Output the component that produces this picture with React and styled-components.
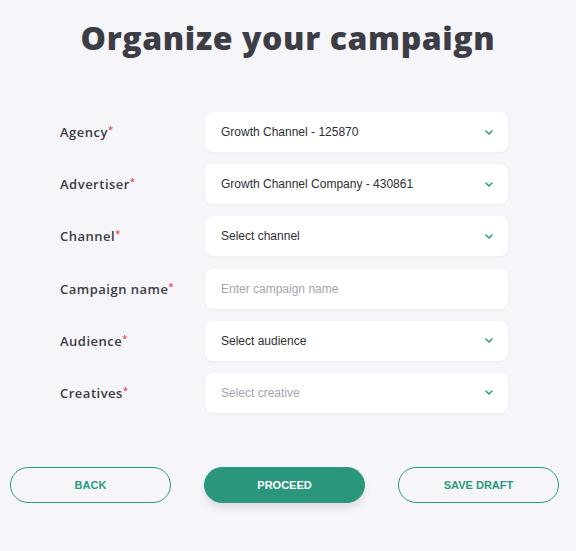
import React from "react";
import styled, { createGlobalStyle } from "styled-components";

const Global = createGlobalStyle`
  html, body { margin: 0; padding: 0; background: #f6f6fa; }
  body { font-family: "Liberation Sans", Arial, sans-serif; }
`;

const Page = styled.div`
  width: 576px;
  height: 551px;
  background: #f6f6fa;
  box-sizing: border-box;
  padding-top: 17px;
`;

const Title = styled.h1`
  margin: 0;
  text-align: center;
  font-family: "Open Sans", sans-serif;
  font-weight: 800;
  font-size: 32px;
  line-height: 42px;
  color: #3d3d45;
  letter-spacing: 0.6px;
`;

const Form = styled.div`
  display: flex;
  flex-direction: column;
  gap: 12.2px;
  margin-top: 53px;
  padding-left: 60px;
`;

const Row = styled.div`
  display: grid;
  grid-template-columns: 145px 303px;
  align-items: center;
`;

const Label = styled.div`
  font-family: "Open Sans", sans-serif;
  font-weight: 600;
  font-size: 13px;
  line-height: 16px;
  color: #3c3c44;
  letter-spacing: 0.5px;
  margin-top: -2px;
`;

const Star = styled.span`
  color: #e8404f;
  font-size: 9px;
  vertical-align: 4px;
  margin-left: 0;
`;

const Field = styled.div`
  height: 40px;
  box-sizing: border-box;
  background: #ffffff;
  border-radius: 8px;
  box-shadow: 0 1px 3px rgba(60, 60, 90, 0.06);
  display: flex;
  align-items: center;
  justify-content: space-between;
  padding: 0 15px 0 16px;
  font-size: 12px;
  color: ${(p) => (p.$muted ? "#a4a4b2" : "#2e2e34")};
`;

const Chevron = () => (
  <svg width="8" height="5" viewBox="0 0 8 5" fill="none">
    <path d="M1 1 L4 4 L7 1" stroke="#2a9a80" strokeWidth="1.5" strokeLinecap="round" strokeLinejoin="round" />
  </svg>
);

const Buttons = styled.div`
  display: flex;
  gap: 33px;
  padding-left: 10px;
  margin-top: 54px;
`;

const Button = styled.button`
  width: 161px;
  height: 36px;
  border-radius: 18px;
  box-sizing: border-box;
  font-family: "Liberation Sans", Arial, sans-serif;
  font-weight: 700;
  font-size: 11px;
  text-transform: uppercase;
  cursor: pointer;
  border: 1px solid #2a9a80;
  background: ${(p) => (p.$primary ? "#2a967b" : "transparent")};
  color: ${(p) => (p.$primary ? "#ffffff" : "#279a7c")};
  box-shadow: ${(p) => (p.$primary ? "0 5px 6px rgba(40, 40, 60, 0.12)" : "none")};
`;

const rows = [
  { label: "Agency", value: "Growth Channel - 125870", select: true },
  { label: "Advertiser", value: "Growth Channel Company - 430861", select: true },
  { label: "Channel", value: "Select channel", select: true },
  { label: "Campaign name", value: "Enter campaign name", muted: true },
  { label: "Audience", value: "Select audience", select: true },
  { label: "Creatives", value: "Select creative", select: true, muted: true },
];

export default function App() {
  return (
    <Page>
      <Global />
      <Title>Organize your campaign</Title>
      <Form>
        {rows.map((r) => (
          <Row key={r.label}>
            <Label>
              {r.label}
              <Star>*</Star>
            </Label>
            <Field $muted={r.muted}>
              <span>{r.value}</span>
              {r.select && <Chevron />}
            </Field>
          </Row>
        ))}
      </Form>
      <Buttons>
        <Button>Back</Button>
        <Button $primary>Proceed</Button>
        <Button>Save draft</Button>
      </Buttons>
    </Page>
  );
}
